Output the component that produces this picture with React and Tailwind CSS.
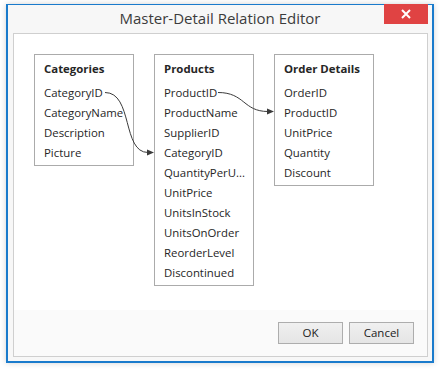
import React from "react";

function Table({ title, rows }) {
  return (
    <div className="w-[100px] border border-[#ababab] bg-white pl-[9px] pt-[4px] pb-[2px]">
      <div className="h-[20px] leading-[20px] font-bold text-[#262626] whitespace-nowrap">{title}</div>
      <div className="mt-[4px] flex flex-col">
        {rows.map((r) => (
          <div key={r} className="h-[20px] leading-[20px] whitespace-nowrap text-[#262626]">
            {r}
          </div>
        ))}
      </div>
    </div>
  );
}

export default function App() {
  return (
    <div className="w-[440px] h-[372px] bg-white pl-[6px] pt-[4px] font-['Open_Sans',sans-serif] text-[11.4px]">
      <div className="relative w-[428px] h-[359px] bg-[#f7f7f7] border-x-2 border-b-2 border-t border-[#1a7bcc] shadow-[0_0_6px_rgba(0,0,0,0.18)] flex flex-col">
        <div className="h-[28px] flex items-center justify-center text-[15px] text-[#3c3c3c] pb-[1px]">
          Master-Detail Relation Editor
        </div>
        <div className="absolute right-[4px] top-[-1px] w-[44px] h-[20px] bg-[#e04343] flex items-center justify-center">
          <svg width="10" height="10" viewBox="0 0 10 10">
            <path d="M1 1 L9 9 M9 1 L1 9" stroke="#fff" strokeWidth="2" fill="none" />
          </svg>
        </div>
        <div className="ml-[5px] w-[415px] h-[324px] border border-[#cfcfcf] flex flex-col">
          <div className="relative h-[276px] bg-white pl-[20px] pt-[20px] flex items-start gap-[20px]">
            <Table title="Categories" rows={["CategoryID", "CategoryName", "Description", "Picture"]} />
            <Table
              title="Products"
              rows={[
                "ProductID",
                "ProductName",
                "SupplierID",
                "CategoryID",
                "QuantityPerU...",
                "UnitPrice",
                "UnitsInStock",
                "UnitsOnOrder",
                "ReorderLevel",
                "Discontinued",
              ]}
            />
            <Table title="Order Details" rows={["OrderID", "ProductID", "UnitPrice", "Quantity", "Discount"]} />
            <svg
              className="absolute left-[-14px] top-[-34px] pointer-events-none"
              width="440"
              height="372"
              viewBox="0 0 440 372"
            >
              <path d="M105 92.5 C133 92.5 122 152.5 148 152.5" stroke="#3a3a3a" strokeWidth="1" fill="none" />
              <polygon points="147,149.5 154,152.5 147,155.5" fill="#3a3a3a" />
              <path d="M218 92.5 C245 92.5 243 111.5 268 111.5" stroke="#3a3a3a" strokeWidth="1" fill="none" />
              <polygon points="267,108.5 274,111.5 267,114.5" fill="#3a3a3a" />
            </svg>
          </div>
          <div className="flex-1 bg-[#fafafa] flex items-center justify-end pr-[13px] gap-[6px]">
            <button className="w-[65px] h-[22px] border border-[#adadad] bg-gradient-to-b from-[#f0f0f0] to-[#e5e5e5] text-[#222] text-[11.5px] leading-[20px]">
              OK
            </button>
            <button className="w-[65px] h-[22px] border border-[#adadad] bg-gradient-to-b from-[#f0f0f0] to-[#e5e5e5] text-[#222] text-[11.5px] leading-[20px]">
              Cancel
            </button>
          </div>
        </div>
      </div>
    </div>
  );
}
